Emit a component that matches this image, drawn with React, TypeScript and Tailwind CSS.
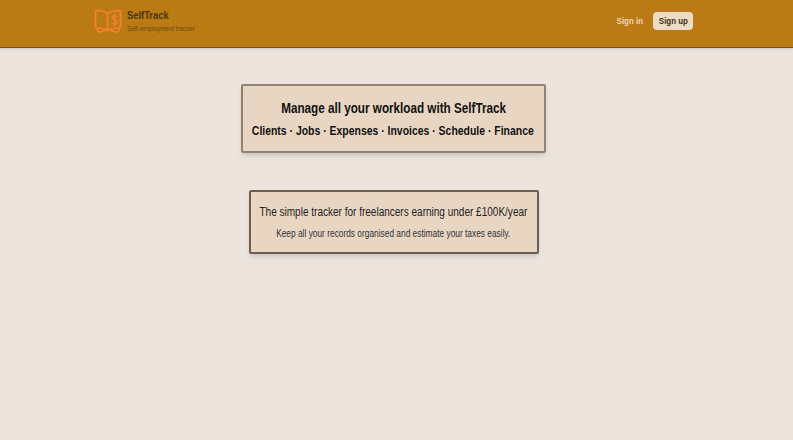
export default function App() {
  return (
    <div className="min-h-[440px] bg-[#ece4dd] font-['Liberation_Sans',sans-serif]">
      <header className="h-[48px] bg-[#ba7b14] border-b border-[#7a4f08] flex items-center justify-between pb-[5px] pl-[94px] pr-[100px] shadow-sm">
        <div className="flex items-center gap-[5px]">
          <svg width="28" height="25" viewBox="0 0 28 25" fill="none" stroke="#f9812c" strokeWidth="1.7" strokeLinecap="round" strokeLinejoin="round">
            <path d="M13.5 5C12 3 9 1.5 3 1.5C2 1.5 1.5 2 1.5 3V17.5C1.5 18.5 2 19 3 19C8 19 11.5 20 13.5 21.5C15.5 20 19.5 19 25 19C26 19 26.5 18.5 26.5 17.5V3C26.5 2 26 1.5 25 1.5C19.5 1.5 15 3 13.5 5Z" />
            <path d="M13.5 5V21.5" />
            <path d="M3.5 19.5C3 21 3.5 23 5.5 23C8 23 10 21.5 11.5 20.5M24.5 19.5C25 21 24.5 23 22.5 23C20 23 17.5 21.5 15.5 20.5" />
            <path d="M23 8C22.4 7 21.4 6.6 20.4 6.6C19.1 6.6 18 7.3 18 8.6C18 11.4 23.1 10.2 23.1 13C23.1 14.4 21.8 15 20.6 15C19.5 15 18.4 14.6 17.8 13.6M20.5 4.8V16.6" strokeWidth="1.3" />
          </svg>
          <div className="flex flex-col items-start">
            <span className="origin-left scale-x-[0.85] text-[11px] leading-[14px] font-bold text-[#4a3410]">SelfTrack</span>
            <span className="origin-left scale-x-[0.835] whitespace-nowrap text-[7.5px] leading-[10px] mt-[2px] text-[#6a4a14]">Self-employment tracker</span>
          </div>
        </div>
        <div className="flex items-center gap-[7px]">
          <span className="scale-x-[0.835] whitespace-nowrap text-[9.5px] font-bold text-[#ecd9bf]">Sign in</span>
          <span className="h-[18px] w-[40px] flex items-center justify-center rounded-[4px] bg-[#ecdcc6] text-[#3d2c14]">
            <span className="scale-x-[0.835] whitespace-nowrap text-[9.5px] font-bold">Sign up</span>
          </span>
        </div>
      </header>
      <main className="flex flex-col items-center pt-[36px] pr-[7px]">
        <div className="w-[305px] h-[69px] flex flex-col items-center justify-center rounded-[2px] border-2 border-[#8f8270] bg-[#e8d6c2] shadow-md">
          <h1 className="ml-[1px] scale-x-[0.835] whitespace-nowrap text-[14px] leading-[18px] font-bold text-[#111]">Manage all your workload with SelfTrack</h1>
          <p className="scale-x-[0.835] whitespace-nowrap mt-[6px] text-[12.5px] leading-[16px] font-bold text-[#111]">Clients · Jobs · Expenses · Invoices · Schedule · Finance</p>
        </div>
        <div className="ml-[1px] mt-[37px] w-[290px] h-[64px] flex flex-col items-center justify-center rounded-[2px] border-2 border-[#6a5f50] bg-[#e8d6c2] shadow-md">
          <h2 className="mb-[1px] scale-x-[0.835] whitespace-nowrap text-[12px] leading-[16px] text-[#222]">The simple tracker for freelancers earning under £100K/year</h2>
          <p className="scale-x-[0.835] whitespace-nowrap mt-[7px] text-[10px] leading-[12px] text-[#333]">Keep all your records organised and estimate your taxes easily.</p>
        </div>
      </main>
    </div>
  );
}
